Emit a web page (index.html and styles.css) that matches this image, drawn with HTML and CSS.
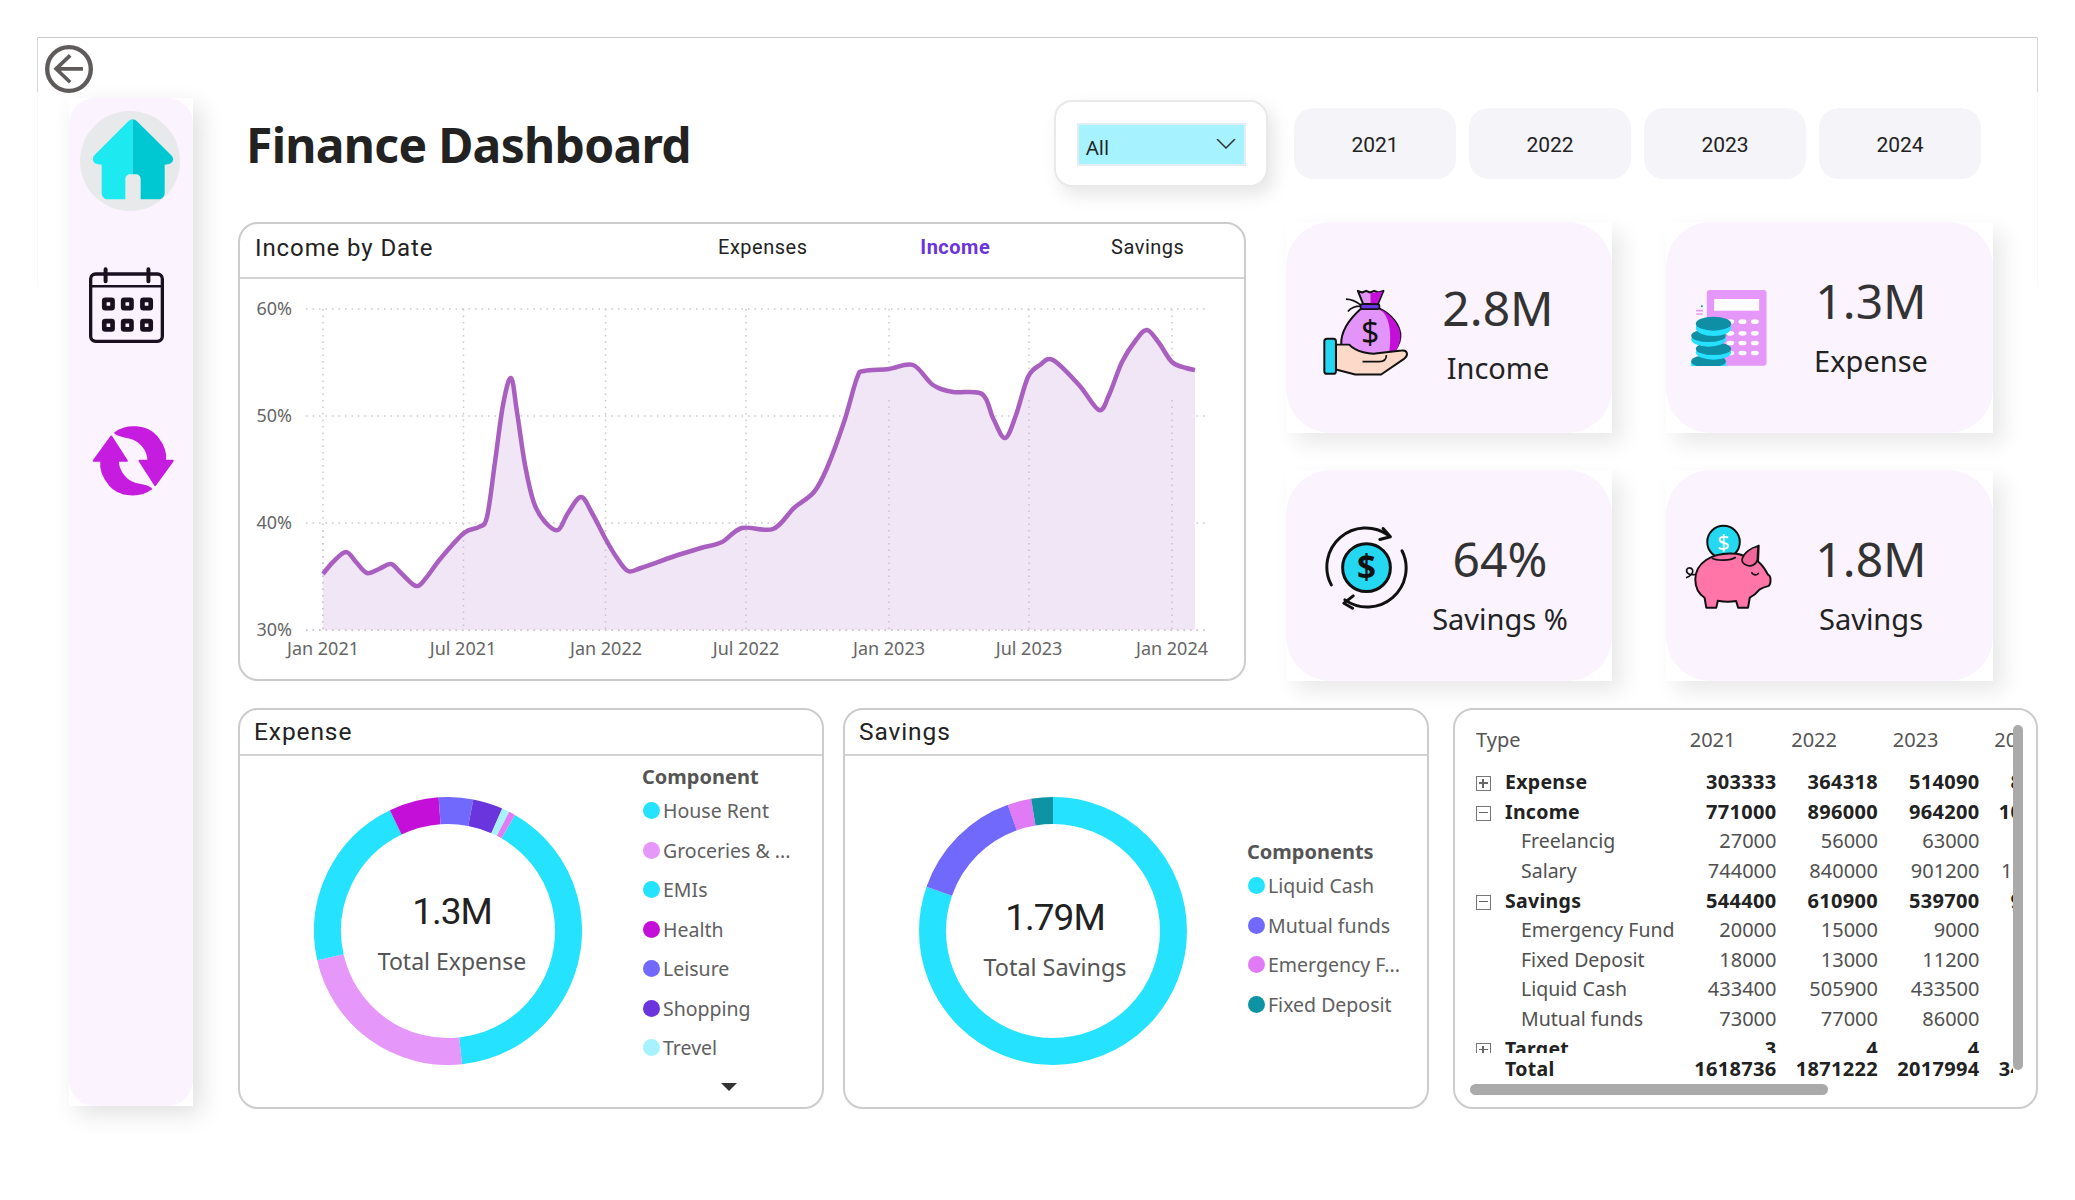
FILE: index.html
```html
<!DOCTYPE html>
<html>
<head>
    <title>Finance Dashboard</title>
    <link rel="stylesheet" href="styles.css">
</head>
<body>
    <div class="frame"></div>
    <svg class="back-btn" viewBox="75 75 143 143">
        <circle cx="146.500" cy="146.500" r="65" fill="none" stroke="#5f5b5b" stroke-width="13"/>
        <path d="M188 146H108M150 106l-42 40 42 40" fill="none" stroke="#5f5b5b" stroke-width="11"/>
    </svg>

    <div class="page">
        <div class="sidebar-shell">
            <nav class="sidebar">
                <svg class="nav-home" viewBox="180 275 300 300">
                    <circle cx="330" cy="425" r="150" fill="#e8e9eb"/>
                    <path d="M338 300c-5 0-9 2-13 6L224 407c-5 5-6 10-5 15 1 7 8 14 26 14v84c0 12 8 20 20 20h51v-60c0-9 6-15 15-15h7z" fill="#1de9f0"/>
                    <path d="M338 300c5 0 9 2 13 6l102 101c5 5 7 10 6 15-1 7-8 14-25 14v84c0 12-8 20-20 20h-52v-60c0-9-6-15-15-15h-9z" fill="#00c8d2"/>
                </svg>
                <svg class="nav-calendar" viewBox="205 740 235 232">
                    <rect x="213" y="761" width="216" height="203" rx="15" fill="none" stroke="#1a1020" stroke-width="10"/>
                    <path d="M212 798H430" stroke="#1a1020" stroke-width="7"/>
                    <path d="M258 747v36M387 747v36" stroke="#1a1020" stroke-width="12" stroke-linecap="round"/>
                    <g fill="#fbf3fe" stroke="#1a1020" stroke-width="14">
                        <rect x="254" y="839" width="25" height="25" rx="3"/>
                        <rect x="311" y="839" width="25" height="25" rx="3"/>
                        <rect x="369" y="839" width="25" height="25" rx="3"/>
                        <rect x="254" y="903" width="25" height="25" rx="3"/>
                        <rect x="311" y="903" width="25" height="25" rx="3"/>
                        <rect x="369" y="903" width="25" height="25" rx="3"/>
                    </g>
                </svg>
                <svg class="nav-sync" viewBox="215 1215 250 215">
                    <g fill="#c61ce0" stroke="#c61ce0" stroke-width="6" stroke-linejoin="round">
                        <path d="M285 1238c35-26 95-23 125 12 20 25 28 50 25 72h23l-53 73-47-73h27c0-32-25-67-65-72-15-2-25-5-35-12z"/>
                        <path d="M393 1406c-35 26-95 23-125-12-20-25-28-50-25-72h-23l53-73 47 73h-27c0 32 25 67 65 72 15 2 25 5 35 12z"/>
                    </g>
                </svg>
            </nav>
        </div>

        <main class="main">
            <header class="top-bar">
                <h1 class="title">Finance Dashboard</h1>
                <div class="slicer-card">
                    <div class="slicer">
                        <span>All</span>
                        <svg class="chevron" viewBox="0 0 20 10"><path d="M1 0l9 9 9-9" fill="none" stroke="#333" stroke-width="1.500"/></svg>
                    </div>
                </div>
                <div class="years">
                    <div class="year-btn">2021</div>
                    <div class="year-btn">2022</div>
                    <div class="year-btn">2023</div>
                    <div class="year-btn">2024</div>
                </div>
            </header>

            <section class="middle">
                <div class="card line-card">
                    <div class="card-head">
                        <div class="card-title">Income by Date</div>
                        <div class="tabs">
                            <div class="tab">Expenses</div>
                            <div class="tab tab-active">Income</div>
                            <div class="tab">Savings</div>
                        </div>
                    </div>
                    <svg class="line-chart" viewBox="240 279 1004 400">
                        <g class="grid">
                            <path d="M306 309H1207M306 416H1207M306 523H1207M306 630H1207"/>
                            <path d="M323 309V630M463.500 309V630M605.500 309V630M746 309V630M889 309V630M1029 309V630M1172 309V630"/>
                        </g>
                        <path id="income-area" fill="#f0e6f6"/>
                        <g class="grid grid-over">
                            <path d="M306 630H1207"/>
                            <path d="M323 530V630M463.500 540V630M605.500 530V630M746 530V630M889 400V630M1029 400V630M1172 400V630"/>
                        </g>
                        <path id="income-line" fill="none" stroke="#a85fbf" stroke-width="4.500" stroke-linejoin="round"/>
                        <g class="tick tick-y">
                            <text x="292" y="315">60%</text>
                            <text x="292" y="422">50%</text>
                            <text x="292" y="529">40%</text>
                            <text x="292" y="636">30%</text>
                        </g>
                        <g class="tick tick-x">
                            <text x="323" y="655">Jan 2021</text>
                            <text x="463" y="655">Jul 2021</text>
                            <text x="606" y="655">Jan 2022</text>
                            <text x="746" y="655">Jul 2022</text>
                            <text x="889" y="655">Jan 2023</text>
                            <text x="1029" y="655">Jul 2023</text>
                            <text x="1172" y="655">Jan 2024</text>
                        </g>
                    </svg>
                </div>

                <div class="kpis">
                    <div class="kpi-shell">
                        <div class="kpi kpi-income">
                            <svg class="kpi-icon" viewBox="150 235 265 270">
                                <path d="M222 268c18 0 30 6 45 18M228 305c8-10 22-16 38-16" fill="none" stroke="#111" stroke-width="5"/>
                                <path d="M268 296c-36 32-62 68-60 108 2 30 40 50 90 50 40 0 85-30 88-72 2-36-30-70-64-86z" fill="#e294f8" stroke="#111" stroke-width="6"/>
                                <path d="M322 296c28 20 42 60 28 152 20-10 34-38 36-66 2-36-30-70-64-86z" fill="#c30fd8"/>
                                <path d="M258 243l13 5 12-5 12 5 12-5 13 5 15-5-17 40h-44z" fill="#e294f8" stroke="#111" stroke-width="6" stroke-linejoin="round"/>
                                <path d="M296 250l36-5-15 37h-21z" fill="#c30fd8"/>
                                <rect x="266" y="283" width="57" height="15" rx="5" fill="#6a35dc" stroke="#111" stroke-width="5"/>
                                <text class="bag-dollar" x="295" y="403">$</text>
                                <path d="M192 405h40c20 22 65 30 85 26l73-8c16-3 22 12 8 24l-70 48H250l-58-15z" fill="#fcd9c8" stroke="#111" stroke-width="6" stroke-linejoin="round"/>
                                <path d="M272 456h50c15 0 22-8 22-20" fill="none" stroke="#111" stroke-width="5"/>
                                <rect x="157" y="387" width="35" height="106" rx="8" fill="#23d8f0" stroke="#111" stroke-width="6"/>
                            </svg>
                            <div class="kpi-text">
                                <div class="kpi-value">2.8M</div>
                                <div class="kpi-label">Income</div>
                            </div>
                        </div>
                    </div>
                    <div class="kpi-shell">
                        <div class="kpi kpi-expense">
                            <svg class="kpi-icon" viewBox="93 238 227 228">
                                <rect x="140" y="238" width="179" height="227" rx="9" fill="#e597fa"/>
                                <rect x="162" y="265" width="135" height="35" fill="#fff"/>
                                <g fill="#fff">
                                    <ellipse cx="210" cy="333" rx="12" ry="7"/><ellipse cx="247" cy="333" rx="12" ry="7"/><ellipse cx="284" cy="333" rx="12" ry="7"/>
                                    <ellipse cx="210" cy="368" rx="12" ry="7"/><ellipse cx="247" cy="368" rx="12" ry="7"/><ellipse cx="284" cy="368" rx="12" ry="7"/>
                                    <ellipse cx="210" cy="397" rx="12" ry="7"/><ellipse cx="247" cy="397" rx="12" ry="7"/><ellipse cx="284" cy="397" rx="12" ry="7"/>
                                    <ellipse cx="210" cy="427" rx="12" ry="7"/><ellipse cx="247" cy="427" rx="12" ry="7"/><ellipse cx="284" cy="427" rx="12" ry="7"/>
                                </g>
                                <path d="M108 300h20M108 310h20" stroke="#e597fa" stroke-width="5"/>
                                <circle cx="125" cy="287" r="3" fill="#0e8fa5"/>
                                <rect x="93" y="448" width="105" height="18" rx="9" fill="#26e0ff"/>
                                <ellipse cx="145" cy="463" rx="52" ry="22" fill="#26e0ff"/>
                                <ellipse cx="145" cy="452" rx="52" ry="19" fill="#0e8fa5"/>
                                <ellipse cx="160" cy="425" rx="53" ry="22" fill="#26e0ff"/>
                                <ellipse cx="160" cy="414" rx="53" ry="19" fill="#0e8fa5"/>
                                <ellipse cx="145" cy="386" rx="52" ry="22" fill="#26e0ff"/>
                                <ellipse cx="145" cy="375" rx="52" ry="19" fill="#0e8fa5"/>
                                <ellipse cx="160" cy="352" rx="53" ry="24" fill="#26e0ff"/>
                                <ellipse cx="160" cy="339" rx="53" ry="21" fill="#0e8fa5"/>
                            </svg>
                            <div class="kpi-text">
                                <div class="kpi-value">1.3M</div>
                                <div class="kpi-label">Expense</div>
                            </div>
                        </div>
                    </div>
                    <div class="kpi-shell">
                        <div class="kpi kpi-percent">
                            <svg class="kpi-icon" viewBox="165 945 250 255">
                                <g fill="none" stroke="#111" stroke-width="9" stroke-linecap="round" stroke-linejoin="round">
                                    <path d="M184 1125A117 117 0 0 1 355 975"/>
                                    <path d="M340 955l22 25-32 8"/>
                                    <path d="M397 1022A117 117 0 0 1 225 1170"/>
                                    <path d="M250 1158l-28 22 26 15"/>
                                </g>
                                <circle cx="290" cy="1073" r="72" fill="#23d8f0" stroke="#111" stroke-width="9"/>
                                <text class="cycle-dollar" x="290" y="1108">$</text>
                            </svg>
                            <div class="kpi-text">
                                <div class="kpi-value">64%</div>
                                <div class="kpi-label">Savings %</div>
                            </div>
                        </div>
                    </div>
                    <div class="kpi-shell">
                        <div class="kpi kpi-savings">
                            <svg class="kpi-icon" viewBox="65 940 280 265">
                                <path d="M105 1095c-15 2-28-2-26-14 2-8 14-8 18 0 3 8-6 20-20 24" fill="none" stroke="#111" stroke-width="5"/>
                                <circle cx="190" cy="997" r="49" fill="#23d8f0" stroke="#111" stroke-width="6"/>
                                <text class="pig-dollar" x="190" y="1021">$</text>
                                <path d="M105 1110c0-50 50-80 110-78 22 0 35 5 45 12 8-14 20-30 36-36l-2 48c14 12 24 28 30 40 10 2 10 30 0 34-8 2-18 6-25 10-10 12-20 20-30 25l-5 30h-30l-6-20c-12 2-40 2-55-1l-5 21h-30l-5-30c-18-12-28-32-28-55z" fill="#ff75a8" stroke="#111" stroke-width="6" stroke-linejoin="round"/>
                                <path d="M246 1048c5-18 26-34 48-38l-2 40c-2 14-18 22-30 18-10-3-18-10-16-20z" fill="#f0659a" stroke="#111" stroke-width="5"/>
                                <path d="M275 1090c6 8 14 8 20 2" fill="none" stroke="#111" stroke-width="5" stroke-linecap="round"/>
                                <path d="M155 1046c15 8 55 8 72-3" fill="none" stroke="#111" stroke-width="5"/>
                            </svg>
                            <div class="kpi-text">
                                <div class="kpi-value">1.8M</div>
                                <div class="kpi-label">Savings</div>
                            </div>
                        </div>
                    </div>
                </div>
            </section>

            <section class="bottom">
                <div class="card">
                    <div class="card-head card-head-small">
                        <div class="card-title">Expense</div>
                    </div>
                    <div class="donut-body">
                        <div class="donut">
                            <svg viewBox="-134 -134 268 268">
                                <g fill="none" stroke-width="27">
                                    <circle r="120.500" pathLength="360" stroke="#25e2ff" stroke-dasharray="144 216" transform="rotate(-60)"/>
                                    <circle r="120.500" pathLength="360" stroke="#e597fa" stroke-dasharray="83.400 276.600" transform="rotate(84)"/>
                                    <circle r="120.500" pathLength="360" stroke="#25e2ff" stroke-dasharray="76.900 283.100" transform="rotate(167.400)"/>
                                    <circle r="120.500" pathLength="360" stroke="#c30fd8" stroke-dasharray="21.700 338.300" transform="rotate(244.300)"/>
                                    <circle r="120.500" pathLength="360" stroke="#7069fb" stroke-dasharray="14.900 345.100" transform="rotate(266)"/>
                                    <circle r="120.500" pathLength="360" stroke="#6a35dc" stroke-dasharray="13 347" transform="rotate(280.900)"/>
                                    <circle r="120.500" pathLength="360" stroke="#a7f2ff" stroke-dasharray="3.300 356.700" transform="rotate(293.900)"/>
                                    <circle r="120.500" pathLength="360" stroke="#e07bf5" stroke-dasharray="2.800 357.200" transform="rotate(297.200)"/>
                                </g>
                            </svg>
                            <div class="donut-center">
                                <div class="donut-value">1.3M</div>
                                <div class="donut-label">Total Expense</div>
                            </div>
                        </div>
                        <div class="legend legend-expense">
                            <div class="legend-title">Component</div>
                            <div class="legend-item"><i class="dot dot-cyan"></i>House Rent</div>
                            <div class="legend-item"><i class="dot dot-lilac"></i>Groceries &amp; ...</div>
                            <div class="legend-item"><i class="dot dot-cyan"></i>EMIs</div>
                            <div class="legend-item"><i class="dot dot-magenta"></i>Health</div>
                            <div class="legend-item"><i class="dot dot-periwinkle"></i>Leisure</div>
                            <div class="legend-item"><i class="dot dot-violet"></i>Shopping</div>
                            <div class="legend-item"><i class="dot dot-pale"></i>Trevel</div>
                            <div class="legend-more"></div>
                        </div>
                    </div>
                </div>

                <div class="card">
                    <div class="card-head card-head-small">
                        <div class="card-title">Savings</div>
                    </div>
                    <div class="donut-body">
                        <div class="donut">
                            <svg viewBox="-134 -134 268 268">
                                <g fill="none" stroke-width="27">
                                    <circle r="120.500" pathLength="360" stroke="#25e2ff" stroke-dasharray="289.300 70.700" transform="rotate(-90)"/>
                                    <circle r="120.500" pathLength="360" stroke="#7069fb" stroke-dasharray="51 309" transform="rotate(199.300)"/>
                                    <circle r="120.500" pathLength="360" stroke="#e07bf5" stroke-dasharray="10.400 349.600" transform="rotate(250.200)"/>
                                    <circle r="120.500" pathLength="360" stroke="#0e93a5" stroke-dasharray="9.400 350.600" transform="rotate(260.600)"/>
                                </g>
                            </svg>
                            <div class="donut-center donut-center-low">
                                <div class="donut-value">1.79M</div>
                                <div class="donut-label donut-label-savings">Total Savings</div>
                            </div>
                        </div>
                        <div class="legend legend-savings">
                            <div class="legend-title">Components</div>
                            <div class="legend-item"><i class="dot dot-cyan"></i>Liquid Cash</div>
                            <div class="legend-item"><i class="dot dot-periwinkle"></i>Mutual funds</div>
                            <div class="legend-item"><i class="dot dot-pink"></i>Emergency F...</div>
                            <div class="legend-item"><i class="dot dot-teal"></i>Fixed Deposit</div>
                        </div>
                    </div>
                </div>

                <div class="card matrix-card">
                    <div class="matrix-clip matrix-rows">
                        <table class="matrix">
                            <colgroup><col class="col-type"><col class="col-year"><col class="col-year"><col class="col-year"><col class="col-year"></colgroup>
                            <thead>
                                <tr><th class="type">Type</th><th>2021</th><th>2022</th><th>2023</th><th>2024</th></tr>
                            </thead>
                            <tbody>
                                <tr class="group"><td><i class="expander plus"></i>Expense</td><td>303333</td><td>364318</td><td>514090</td><td>815000</td></tr>
                                <tr class="group"><td><i class="expander minus"></i>Income</td><td>771000</td><td>896000</td><td>964200</td><td>1051000</td></tr>
                                <tr><td class="child">Freelancig</td><td>27000</td><td>56000</td><td>63000</td><td>68000</td></tr>
                                <tr><td class="child">Salary</td><td>744000</td><td>840000</td><td>901200</td><td>1001000</td></tr>
                                <tr class="group"><td><i class="expander minus"></i>Savings</td><td>544400</td><td>610900</td><td>539700</td><td>942000</td></tr>
                                <tr><td class="child">Emergency Fund</td><td>20000</td><td>15000</td><td>9000</td><td>7000</td></tr>
                                <tr><td class="child">Fixed Deposit</td><td>18000</td><td>13000</td><td>11200</td><td>9000</td></tr>
                                <tr><td class="child">Liquid Cash</td><td>433400</td><td>505900</td><td>433500</td><td>840000</td></tr>
                                <tr><td class="child">Mutual funds</td><td>73000</td><td>77000</td><td>86000</td><td>86000</td></tr>
                                <tr class="group"><td><i class="expander plus"></i>Target</td><td>3</td><td>4</td><td>4</td><td>4</td></tr>
                            </tbody>
                        </table>
                    </div>
                    <div class="matrix-clip">
                        <table class="matrix">
                            <colgroup><col class="col-type"><col class="col-year"><col class="col-year"><col class="col-year"><col class="col-year"></colgroup>
                            <tr class="group total"><td>Total</td><td>1618736</td><td>1871222</td><td>2017994</td><td>3400000</td></tr>
                        </table>
                    </div>
                    <div class="scroll-v"></div>
                    <div class="scroll-h"></div>
                </div>
            </section>
        </main>
    </div>

    <script>
        // income curve, x and y in page pixels
        var points = [[323,574],[333,562],[346,552],[356,562],[367,573],[379,569],[391,564],[401,573],[416,586],[426,578],[441,558],[464,533],[479,527],[487,517],[495,462],[503,405],[511,378],[517,412],[525,465],[534,503],[545,522],[558,530],[568,513],[581,497],[592,513],[605,538],[617,558],[628,571],[641,568],[675,556],[701,548],[722,542],[742,528],[773,529],[794,508],[814,492],[827,468],[844,422],[857,378],[864,371],[889,369],[913,365],[933,385],[953,392],[982,394],[993,418],[1005,438],[1016,415],[1028,377],[1040,365],[1053,360],[1079,385],[1099,410],[1109,395],[1122,362],[1136,340],[1147,330],[1159,343],[1172,362],[1186,368],[1195,370]];

        var d = 'M' + points[0][0] + ' ' + points[0][1];
        for (var i = 0; i < points.length - 1; i++) {
            var p0 = points[Math.max(i - 1, 0)];
            var p1 = points[i];
            var p2 = points[i + 1];
            var p3 = points[Math.min(i + 2, points.length - 1)];
            d += 'C' + (p1[0] + (p2[0] - p0[0]) / 6) + ' ' + (p1[1] + (p2[1] - p0[1]) / 6) + ' '
                + (p2[0] - (p3[0] - p1[0]) / 6) + ' ' + (p2[1] - (p3[1] - p1[1]) / 6) + ' '
                + p2[0] + ' ' + p2[1];
        }
        document.getElementById('income-line').setAttribute('d', d);
        document.getElementById('income-area').setAttribute('d', d + 'V630H323Z');
    </script>
</body>
</html>
```

FILE: styles.css
```css
* {
    box-sizing: border-box;
}
body {
    margin: 0;
    width: 2075px;
    height: 1200px;
    background: #fff;
    font-family: "Noto Sans", Arial, sans-serif;
    color: #222;
    position: relative;
    overflow: hidden;
}
.frame {
    position: absolute;
    left: 37px;
    top: 37px;
    width: 2001px;
    height: 250px;
    border: 1px solid #f8f8f8;
    border-top-color: #ccc;
    border-bottom: none;
}
.frame::before {
    content: "";
    position: absolute;
    left: -1px;
    right: -1px;
    top: 0;
    height: 54px;
    border: 1px solid #d4d4d4;
    border-top: none;
    border-bottom: none;
}
.back-btn {
    position: absolute;
    left: 45px;
    top: 45px;
    width: 48px;
    height: 48px;
}
.page {
    position: relative;
    display: flex;
    padding: 98px 0 0 69px;
}

/* left nav */
.sidebar-shell {
    width: 124px;
    height: 1008px;
    background: #fff;
    box-shadow: 8px 8px 22px rgba(0, 0, 0, 0.12);
}
.sidebar {
    height: 100%;
    background: #fbf3fe;
    border-radius: 26px;
    display: flex;
    flex-direction: column;
    align-items: center;
    padding-top: 13px;
}
.nav-home {
    width: 100px;
    height: 100px;
    margin-right: 2px;
}
.nav-calendar {
    width: 78px;
    height: 77px;
    margin: 56px 8px 0 0;
}
.nav-sync {
    width: 83px;
    height: 72px;
    margin: 81px 0 0 4px;
}

.main {
    width: 1800px;
    margin-left: 45px;
}

/* title row */
.top-bar {
    height: 124px;
    display: flex;
    align-items: flex-start;
}
.title {
    width: 807px;
    margin: 9px 0 0 8px;
    font-size: 48px;
    font-weight: 700;
    letter-spacing: -0.7px;
    line-height: 76px;
    color: #222;
}
.slicer-card {
    width: 214px;
    height: 87px;
    margin: 2px 0 0 1px;
    padding: 21px 20px 20px 21px;
    background: #fff;
    border: 2px solid #e9e9e9;
    border-radius: 18px;
    box-shadow: 6px 8px 18px rgba(0, 0, 0, 0.1);
}
.slicer {
    height: 43px;
    padding: 5px 8px 0 7px;
    display: flex;
    align-items: center;
    justify-content: space-between;
    background: #a7f2ff;
    border: 2px solid #e3eef3;
    font-size: 20px;
}
.chevron {
    width: 20px;
    height: 10px;
    margin-bottom: 6px;
}
.years {
    display: flex;
    gap: 13px;
    margin: 10px 0 0 26px;
}
.year-btn {
    width: 162px;
    height: 71px;
    padding-top: 2px;
    display: flex;
    align-items: center;
    justify-content: center;
    background: #f4f4f9;
    border-radius: 20px;
    font-family: Roboto, Arial, sans-serif;
    font-size: 21px;
}

/* shared card */
.card {
    background: #fff;
    border: 2px solid #ccc;
    border-radius: 20px;
    overflow: hidden;
}
.card-head {
    height: 55px;
    display: flex;
    align-items: center;
    padding: 0 0 5px 15px;
    border-bottom: 2px solid #d4d4d4;
}
.card-head-small {
    height: 46px;
    padding-bottom: 2px;
    padding-left: 14px;
}
.card-title {
    font-family: Roboto, Arial, sans-serif;
    font-size: 24px;
    letter-spacing: 0.9px;
    color: #222;
}
.card-head-small .card-title {
    font-size: 24.500px;
}

/* line chart + kpis */
.middle {
    display: flex;
    gap: 40px;
    height: 459px;
}
.line-card {
    width: 1008px;
}
.tabs {
    display: flex;
    margin-left: auto;
    padding-bottom: 2px;
}
.tab {
    width: 192.500px;
    text-align: center;
    font-family: Roboto, Arial, sans-serif;
    font-size: 20px;
    letter-spacing: 0.5px;
    color: #222;
}
.tab-active {
    font-weight: 700;
    color: #6a35dc;
}
.line-chart {
    display: block;
    width: 1004px;
    height: 400px;
}
.grid path {
    fill: none;
    stroke: #c9c9c9;
    stroke-width: 1.500;
    stroke-dasharray: 1.500 5;
}
.grid-over path {
    stroke: #cdbdd2;
}
.tick text {
    font-size: 18px;
    fill: #666;
}
.tick-y text {
    text-anchor: end;
}
.tick-x text {
    text-anchor: middle;
}
.kpis {
    display: grid;
    grid-template-columns: 326px 327px;
    grid-template-rows: 211px 211px;
    column-gap: 54px;
    row-gap: 37px;
}
.kpi-shell {
    background: #fff;
    box-shadow: 10px 10px 20px rgba(0, 0, 0, 0.09);
}
.kpi {
    height: 100%;
    display: flex;
    align-items: center;
    background: #fbf3fe;
    border-radius: 45px;
}
.kpi-text {
    text-align: center;
}
.kpi-value {
    font-size: 48px;
    line-height: 56px;
    color: #333;
}
.kpi-label {
    margin-top: 14px;
    font-size: 29px;
    line-height: 36px;
    color: #222;
}
.kpi-income {
    padding: 11px 0 0 36px;
}
.kpi-income .kpi-icon {
    width: 88px;
    height: 90px;
}
.kpi-income .kpi-text {
    width: 176px;
}
.kpi-expense {
    padding: 0 0 3px 25px;
}
.kpi-expense .kpi-icon {
    width: 76px;
    height: 76px;
    margin-top: 3px;
}
.kpi-expense .kpi-text {
    width: 208px;
}
.kpi-percent {
    padding-left: 39px;
}
.kpi-percent .kpi-icon {
    width: 83px;
    height: 85px;
    margin-bottom: 16px;
}
.kpi-percent .kpi-text {
    width: 184px;
    margin-top: 16px;
}
.kpi-savings {
    padding-left: 16px;
}
.kpi-savings .kpi-icon {
    width: 93px;
    height: 88px;
    margin-bottom: 17px;
}
.kpi-savings .kpi-text {
    width: 192px;
    margin-top: 16px;
}
.bag-dollar {
    font-size: 96px;
    text-anchor: middle;
    fill: #111;
}
.cycle-dollar {
    font-size: 100px;
    font-weight: 700;
    text-anchor: middle;
    fill: #111;
}
.pig-dollar {
    font-size: 66px;
    text-anchor: middle;
    fill: #fff;
}

/* donuts */
.bottom {
    display: grid;
    grid-template-columns: 586px 586px 590px;
    column-gap: 19px;
    height: 401px;
    margin-top: 27px;
}
.donut-body {
    display: flex;
    align-items: flex-start;
}
.donut {
    position: relative;
    flex: none;
    width: 268px;
    height: 268px;
    margin: 41px 0 0 74px;
}
.donut svg {
    display: block;
    width: 268px;
    height: 268px;
}
.donut-center {
    position: absolute;
    inset: 0;
    padding: 5px 0 0 8px;
    display: flex;
    flex-direction: column;
    align-items: center;
    justify-content: center;
}
.donut-center-low {
    padding: 17px 0 0 4px;
}
.donut-value {
    font-family: Roboto, Arial, sans-serif;
    font-size: 37px;
    letter-spacing: -1px;
    line-height: 46px;
    color: #222;
}
.donut-label {
    margin-top: 9px;
    font-size: 23px;
    line-height: 34px;
    color: #555;
}
.donut-label-savings {
    font-size: 23.400px;
}
.legend {
    display: flex;
    flex-direction: column;
    margin-left: 60px;
}
.legend-expense {
    padding-top: 7px;
}
.legend-savings {
    padding-top: 82px;
}
.legend-title {
    font-size: 20px;
    font-weight: 700;
    line-height: 28px;
    color: #555;
}
.legend-item {
    height: 39.500px;
    display: flex;
    align-items: center;
    font-size: 19.500px;
    color: #606060;
    white-space: nowrap;
}
.dot {
    flex: none;
    width: 17px;
    height: 17px;
    margin: 0 3px 0 1px;
    border-radius: 50%;
}
.dot-cyan { background: #25e2ff; }
.dot-lilac { background: #e597fa; }
.dot-magenta { background: #c30fd8; }
.dot-periwinkle { background: #7069fb; }
.dot-violet { background: #6a35dc; }
.dot-pale { background: #a7f2ff; }
.dot-pink { background: #e07bf5; }
.dot-teal { background: #0e93a5; }
.legend-more {
    width: 0;
    height: 0;
    margin: 15px 0 0 79px;
    border-left: 8px solid transparent;
    border-right: 8px solid transparent;
    border-top: 8px solid #333;
}

/* matrix */
.matrix-card {
    position: relative;
    width: 585px;
    margin-left: 5px;
    padding: 15px 0 0 21px;
}
.matrix-clip {
    width: 537px;
    overflow: hidden;
}
.matrix-rows {
    height: 328px;
    margin-bottom: 1px;
}
.matrix {
    width: 605px;
    table-layout: fixed;
    border-collapse: collapse;
    font-size: 20px;
    color: #505050;
}
.col-type {
    width: 199px;
}
.col-year {
    width: 101.500px;
}
.matrix th {
    height: 42px;
    padding: 0 41px 14px 0;
    text-align: right;
    font-weight: 400;
    color: #555;
}
.matrix th.type {
    text-align: left;
}
.matrix td {
    height: 29.600px;
    padding: 0;
    text-align: right;
    line-height: 29px;
    white-space: nowrap;
}
.matrix td:first-child {
    text-align: left;
    font-size: 19.500px;
}
.matrix td.child {
    padding-left: 45px;
}
.group td {
    font-weight: 700;
    letter-spacing: 0.3px;
    color: #222;
}
.total td:first-child {
    padding-left: 29px;
}
.expander {
    display: inline-block;
    position: relative;
    width: 15px;
    height: 15px;
    margin-right: 14px;
    vertical-align: -2px;
    border: 1.500px solid #777;
}
.expander::before {
    content: "";
    position: absolute;
    left: 2px;
    right: 2px;
    top: 5px;
    height: 1.500px;
    background: #666;
}
.plus::after {
    content: "";
    position: absolute;
    top: 2px;
    bottom: 2px;
    left: 5px;
    width: 1.500px;
    background: #666;
}
.scroll-v {
    position: absolute;
    left: 558px;
    top: 15px;
    width: 10px;
    height: 345px;
    background: #aaa;
    border-radius: 5px;
}
.scroll-h {
    position: absolute;
    left: 15px;
    top: 374px;
    width: 358px;
    height: 11px;
    background: #aaa;
    border-radius: 6px;
}
```
